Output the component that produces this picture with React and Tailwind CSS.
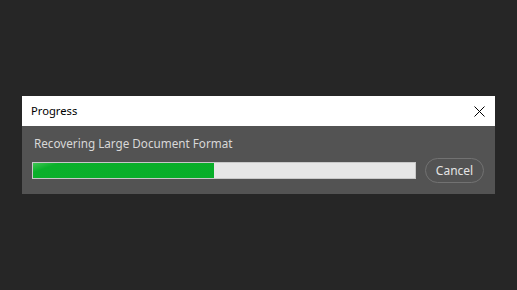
import React from 'react';

function App() {
  const progress = 47.4;

  return (
    <div className="w-[517px] h-[290px] bg-[#262626] flex items-center justify-center font-['Noto_Sans',sans-serif]">
      <div className="w-[473px] flex flex-col">
        {/* title bar */}
        <div className="h-[30px] bg-white flex items-center justify-between pl-[9px] pr-[10px]">
          <span className="text-[11.2px] text-black">Progress</span>
          <svg width="11" height="11" viewBox="0 0 11 11">
            <path d="M0.5 0.5 L10.5 10.5 M10.5 0.5 L0.5 10.5" stroke="#000" strokeWidth="1" fill="none" />
          </svg>
        </div>
        {/* body */}
        <div className="h-[68px] bg-[#535353] flex flex-col pl-[10px] pr-[11px] pt-[9px]">
          <div className="pl-[2px] text-[11.7px] leading-[17px] text-[#d8d8d8]">Recovering Large Document Format</div>
          <div className="flex items-center gap-[9px] mt-[6px]">
            <div className="flex-1 h-[17px] border border-[#c8c8c8] bg-[#e6e6e6]">
              <div
                className="h-full bg-[linear-gradient(160deg,#3fc653_0%,#0bb02b_12%,#08ae29_100%)]"
                style={{ width: `${progress}%` }}
              />
            </div>
            <button className="w-[59px] h-[25px] rounded-full border border-[#727272] text-[12px] text-[#e4e4e4] bg-transparent">
              Cancel
            </button>
          </div>
        </div>
      </div>
    </div>
  );
}

export default App;
